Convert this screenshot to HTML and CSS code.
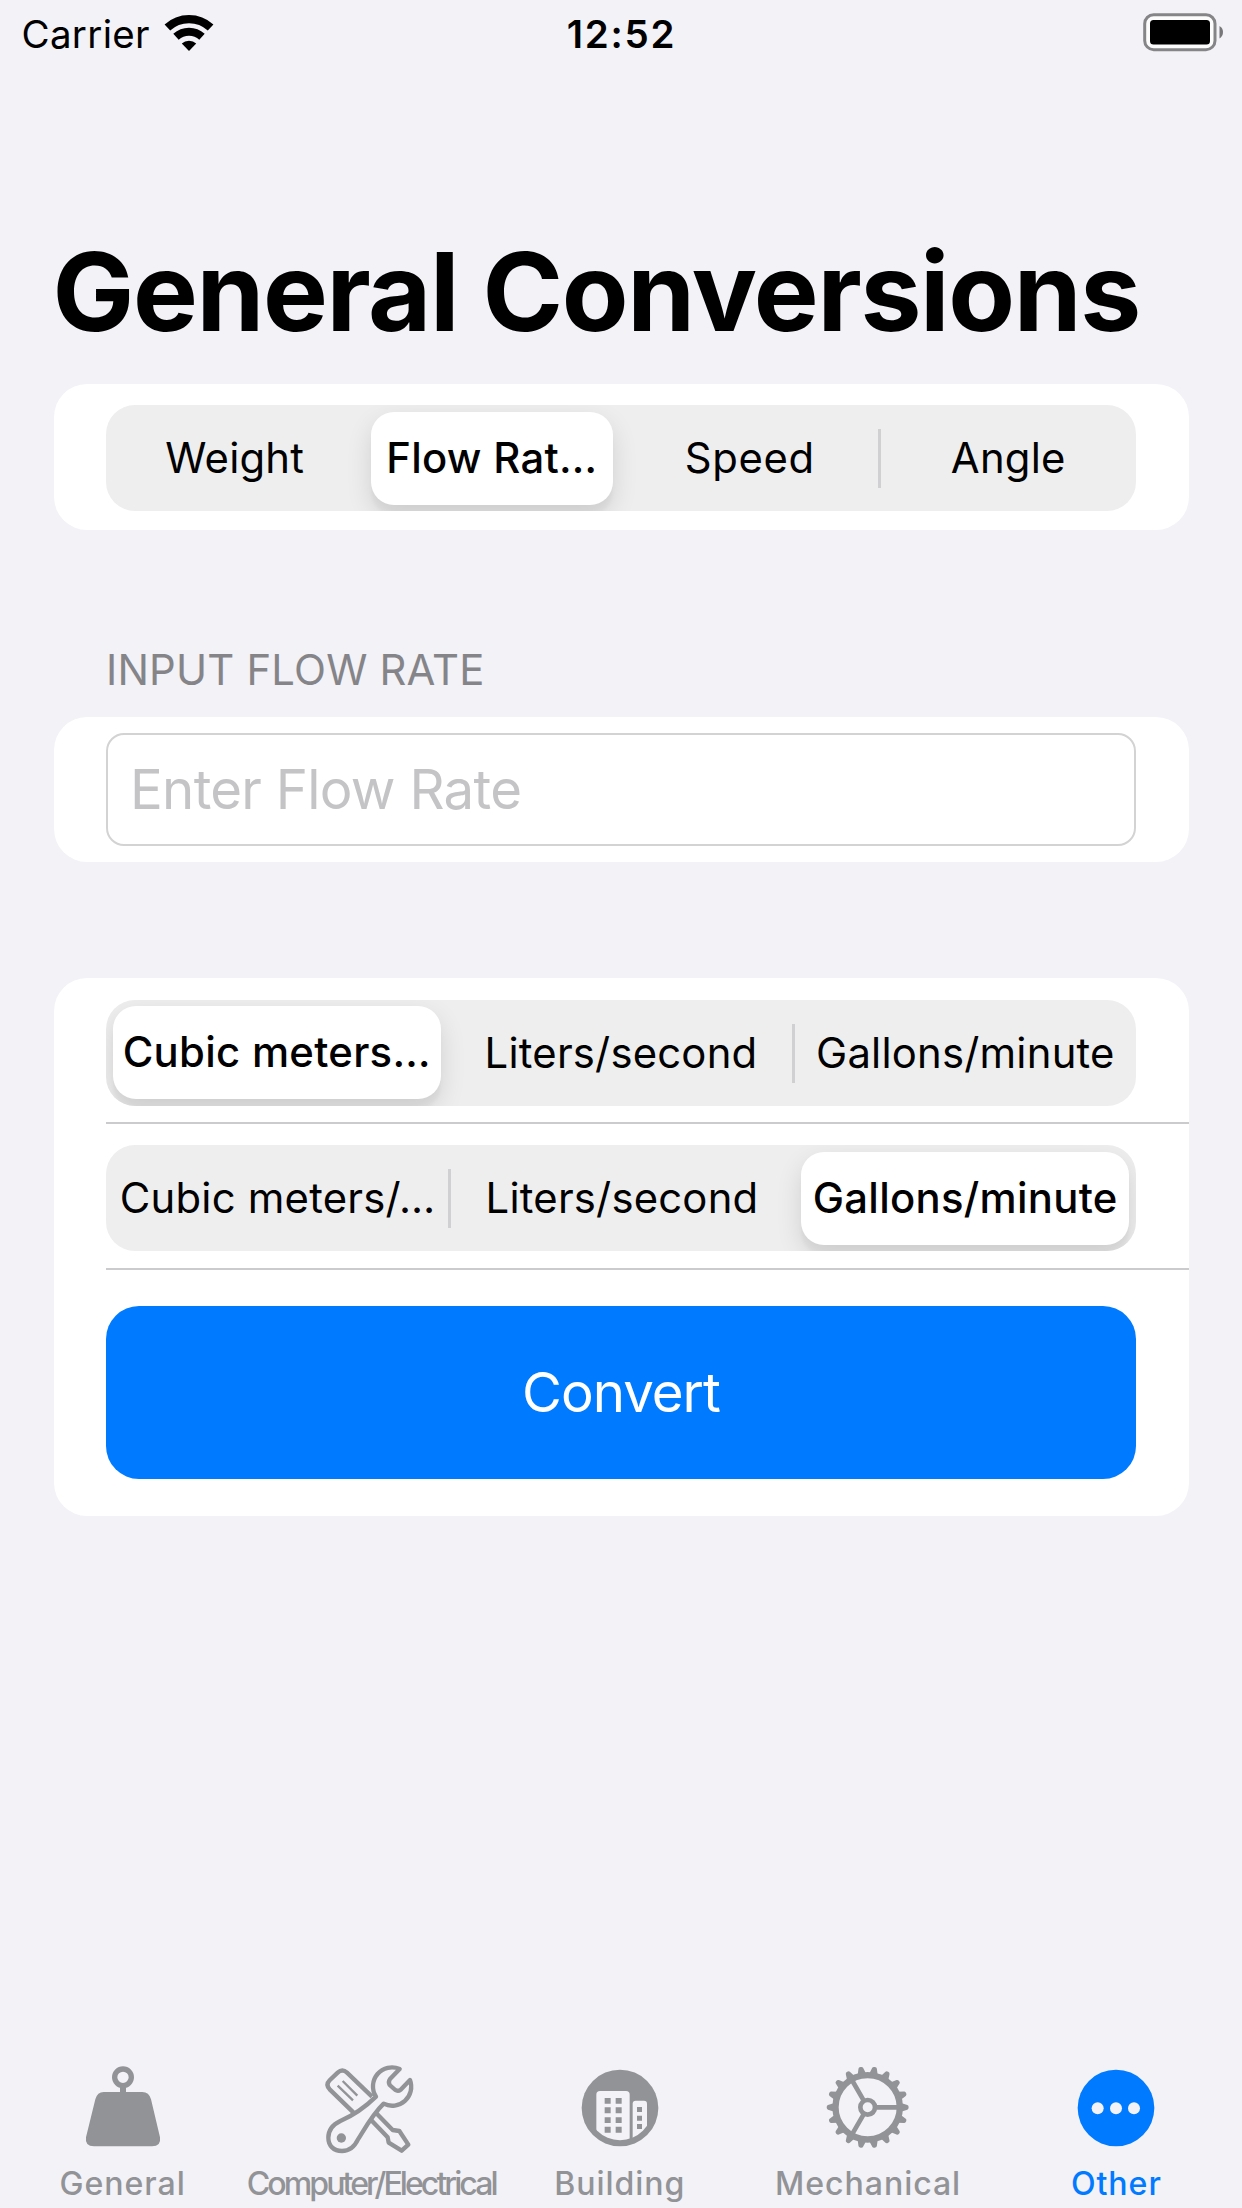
FILE: index.html
```html
<!DOCTYPE html>
<html lang="en">
<head>
<meta charset="utf-8">
<title>General Conversions</title>
<link rel="stylesheet" href="styles.css">
</head>
<body>
<div class="screen">
  <header class="status">
    <div class="status-left">
      <span class="carrier">Carrier</span>
      <svg class="wifi" viewBox="165 14 50 38" width="50" height="38">
        <g fill="none" stroke="#000">
          <path d="M168.4 27.5A31.9 31.9 0 0 1 211.6 27.5" stroke-width="8.3"/>
          <path d="M177 36.8A19.3 19.3 0 0 1 203 36.8" stroke-width="8"/>
        </g>
        <path d="M190 51L182.8 43.6A10.3 10.3 0 0 1 197.2 43.6Z"/>
      </svg>
    </div>
    <span class="clock">12:52</span>
    <svg class="battery" viewBox="1143 12 82 40" width="82" height="40">
      <rect x="1145.7" y="14.7" width="70.3" height="35" rx="9" fill="#fcfcfd" stroke="#858588" stroke-width="3"/>
      <rect x="1151" y="20" width="60" height="24.5" rx="3.5"/>
      <path d="M1220.5 26Q1224 28 1224 32Q1224 36 1220.5 38.500Z" fill="#77777a"/>
    </svg>
  </header>

  <main class="content">
    <h1 class="title">General Conversions</h1>

    <section class="card">
      <div class="row">
        <div class="segmented four">
          <span class="segment">Weight</span>
          <span class="segment selected">Flow Rat…</span>
          <span class="segment wide">Speed</span>
          <span class="segment divided">Angle</span>
        </div>
      </div>
    </section>

    <h2 class="section-title">INPUT FLOW RATE</h2>
    <section class="card">
      <div class="field-row">
        <div class="field">Enter Flow Rate</div>
      </div>
    </section>

    <section class="card convert-card">
      <div class="row ruled">
        <div class="segmented three">
          <span class="segment selected first">Cubic meters…</span>
          <span class="segment">Liters/second</span>
          <span class="segment divided">Gallons/minute</span>
        </div>
      </div>
      <div class="row ruled">
        <div class="segmented three">
          <span class="segment">Cubic meters/…</span>
          <span class="segment divided">Liters/second</span>
          <span class="segment selected last">Gallons/minute</span>
        </div>
      </div>
      <div class="button-row">
        <div class="button">Convert</div>
      </div>
    </section>
  </main>

  <nav class="tabs">
    <div class="tab">
      <svg class="icon" viewBox="40 30 300 288">
        <circle cx="190" cy="82" r="25" fill="none" stroke="currentColor" stroke-width="16"/>
        <path fill="currentColor" d="M181 106H199V126H248Q268 126 274 148L301 262Q305 289 277 289H103Q75 289 79 262L107 148Q113 126 132 126H181Z"/>
      </svg>
      <span class="label">General</span>
    </div>
    <div class="tab">
      <svg class="icon" viewBox="277 30 300 288">
        <g fill="none" stroke="currentColor" stroke-width="13" stroke-linejoin="round">
          <path d="M374 187L303 118Q290 104 303 91L327 68Q341 55 355 68L430 140"/>
          <path d="M342 93L386 137M327 107L373 151" stroke-width="7"/>
          <path d="M443 190L492 240L512 243L539 284L519 302L480 278L477 262L428 211"/>
          <path d="M513 57L484 87Q478 95 483 105L500 120Q508 125 516 119L544 90A57 57 0 0 1 465 161C432 193 412 230 388 268C379 287 363 303 340 303C315 303 299 287 299 263C299 238 314 223 335 213C375 196 405 176 442 140A57 57 0 0 1 513 57Z"/>
        </g>
        <circle cx="338" cy="264" r="14" fill="currentColor"/>
      </svg>
      <span class="label tight">Computer/Electrical</span>
    </div>
    <div class="tab">
      <svg class="icon" viewBox="89 30 300 288">
        <defs><clipPath id="ground"><circle cx="239" cy="174" r="97"/></clipPath></defs>
        <circle cx="239" cy="174" r="115" fill="currentColor"/>
        <g class="cutout" clip-path="url(#ground)">
          <rect x="168" y="123" width="100" height="170" rx="11"/>
          <rect x="277" y="152" width="43" height="140" rx="9"/>
        </g>
        <path fill="currentColor" d="M193 144h18v17h-18zM226 144h18v17h-18zM193 172h18v18h-18zM226 172h18v18h-18zM193 202h18v17h-18zM226 202h18v17h-18zM193 230h18v18h-18zM226 230h18v18h-18zM290 171h15v15h-15zM290 197h15v15h-15zM290 222h15v15h-15z"/>
      </svg>
      <span class="label">Building</span>
    </div>
    <div class="tab">
      <svg class="icon" viewBox="174 30 300 288">
        <defs><path id="tooth" d="M423 159L442 165Q446 166 446 172Q446 178 442 179L423 185Z"/></defs>
        <g fill="none" stroke="currentColor">
          <circle cx="323" cy="172" r="96.500" stroke-width="19"/>
          <circle cx="323" cy="172" r="22" stroke-width="14"/>
          <path d="M349 172H415M310 149.500L277 92.300M310 194.500L277 251.700" stroke-width="14"/>
        </g>
        <g fill="currentColor">
          <use href="#tooth"/><use href="#tooth" transform="rotate(20 323 172)"/><use href="#tooth" transform="rotate(40 323 172)"/>
          <use href="#tooth" transform="rotate(60 323 172)"/><use href="#tooth" transform="rotate(80 323 172)"/><use href="#tooth" transform="rotate(100 323 172)"/>
          <use href="#tooth" transform="rotate(120 323 172)"/><use href="#tooth" transform="rotate(140 323 172)"/><use href="#tooth" transform="rotate(160 323 172)"/>
          <use href="#tooth" transform="rotate(180 323 172)"/><use href="#tooth" transform="rotate(200 323 172)"/><use href="#tooth" transform="rotate(220 323 172)"/>
          <use href="#tooth" transform="rotate(240 323 172)"/><use href="#tooth" transform="rotate(260 323 172)"/><use href="#tooth" transform="rotate(280 323 172)"/>
          <use href="#tooth" transform="rotate(300 323 172)"/><use href="#tooth" transform="rotate(320 323 172)"/><use href="#tooth" transform="rotate(340 323 172)"/>
        </g>
      </svg>
      <span class="label">Mechanical</span>
    </div>
    <div class="tab active">
      <svg class="icon" viewBox="50 30 300 288">
        <circle cx="200" cy="174" r="115" fill="currentColor"/>
        <g class="cutout"><circle cx="145" cy="175" r="18"/><circle cx="200" cy="175" r="18"/><circle cx="254" cy="175" r="18"/></g>
      </svg>
      <span class="label">Other</span>
    </div>
  </nav>
</div>
</body>
</html>
```
FILE: styles.css
```css
* { box-sizing: border-box; }

body {
  margin: 0;
  background: #f2f2f7;
  color: #000;
  font-family: Inter, "Liberation Sans", sans-serif;
}

.screen {
  display: flex;
  flex-direction: column;
  height: 2208px;
  overflow: hidden;
}

/* Status bar */
.status {
  display: grid;
  grid-template-columns: 1fr auto 1fr;
  height: 68px;
  padding: 0 18.5px 0 21.5px;
  font-size: 38.5px;
  line-height: 68px;
}
.status-left { display: flex; align-items: flex-start; gap: 14.5px; }
.carrier { letter-spacing: 0.3px; }
.wifi { margin-top: 14px; }
.clock { margin-left: -2px; font-weight: 570; letter-spacing: 1.8px; }
.battery { justify-self: end; margin: 12px 0 0; }

/* Content */
.content { flex: 1; padding: 0 53.5px; }

.title {
  margin: 157px 0 0 -1px;
  font-size: 109px;
  font-weight: 680;
  line-height: 132px;
  letter-spacing: -1.38px;
  white-space: nowrap;
}

.card {
  border-radius: 33px;
  background: #fff;
  overflow: hidden;
}
.title + .card { margin-top: 27px; }

.row { height: 145.7px; padding: 21.3px 52.5px 0; }
.ruled {
  background: linear-gradient(#cbcbcd, #cbcbcd) 52.500px 100% / 100% 2px no-repeat;
}

.segmented {
  display: grid;
  height: 106px;
  border-radius: 29px;
  background: #eee;
  overflow: hidden;
  font-size: 41.8px;
  line-height: 107px;
  letter-spacing: 0.22px;
  text-align: center;
  white-space: nowrap;
}
.four { grid-template-columns: repeat(4, 1fr); }
.three { grid-template-columns: repeat(3, 1fr); }

.segment { min-width: 0; }
.wide { letter-spacing: 0.7px; }
.divided {
  margin-left: -1px;
  padding-left: 3px;
  background: linear-gradient(#d0d0d3, #d0d0d3) 0 50% / 3px 59px no-repeat;
}
.selected {
  height: 93px;
  margin: 6.600px 8.5px 0 7.5px;
  border-radius: 23px;
  background: #fff;
  box-shadow: 0 10px 26px rgba(0, 0, 0, 0.12), 0 10px 3px rgba(0, 0, 0, 0.03);
  font-weight: 550;
  line-height: 93px;
  letter-spacing: 0.3px;
}
.first { margin-left: 6.600px; }
.last { margin-right: 6.600px; margin-left: 8.3px; }

.section-title {
  margin: 115.5px 0 21.8px 52.5px;
  color: #858589;
  font-size: 41.8px;
  font-weight: 400;
  line-height: 50px;
  letter-spacing: 0.2px;
}

.field-row { height: 145px; padding: 16px 52.5px; }
.field {
  height: 113px;
  padding-left: 22px;
  border: 2px solid #d3d3d4;
  border-radius: 18px;
  color: #c4c4c6;
  font-size: 54.6px;
  line-height: 109px;
  letter-spacing: -0.72px;
}

.convert-card { margin-top: 116.3px; }
.button-row { height: 246px; padding: 36.5px 52.5px; }
.button {
  height: 173px;
  border-radius: 33px;
  background: #007aff;
  color: #fff;
  font-size: 54.6px;
  line-height: 173px;
  letter-spacing: -1px;
  text-align: center;
}

/* Tab bar */
.tabs {
  display: grid;
  grid-template-columns: repeat(5, 1fr);
  height: 148px;
}
.tab {
  display: flex;
  flex-direction: column;
  align-items: center;
  margin-left: -1.5px;
  margin-right: 1.5px;
  color: #929397;
}
.active { color: #007aff; }
.icon { width: 100px; height: 96px; flex: none; }
.cutout { fill: #f2f2f7; }
.label {
  margin-top: 7px;
  font-size: 32.1px;
  font-weight: 450;
  line-height: 42px;
  letter-spacing: 0.95px;
  white-space: nowrap;
}
.tight { letter-spacing: -2.95px; }
```
